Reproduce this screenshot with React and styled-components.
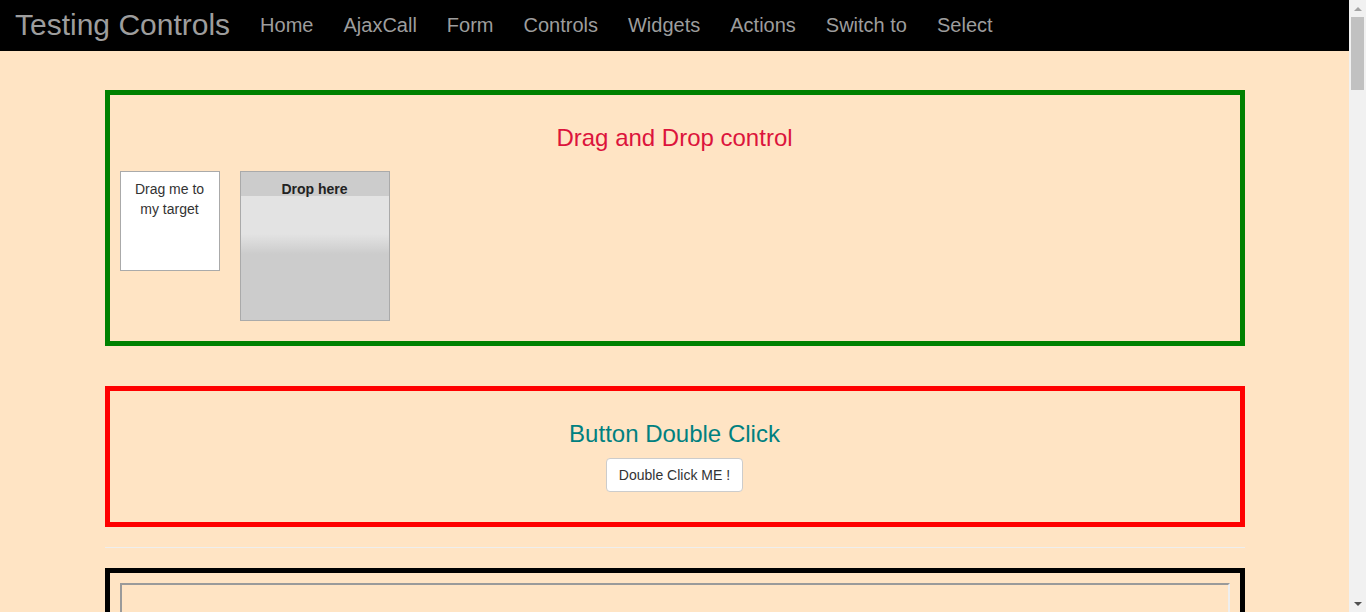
import styled, { createGlobalStyle } from "styled-components"

const GlobalStyle = createGlobalStyle`
  html, body {
    height: 100%;
    overflow: hidden;
  }
  body {
    margin: 0;
    background: bisque;
    font-family: "Liberation Sans", Arial, sans-serif;
    font-size: 14px;
    line-height: 1.42857;
    color: #333;
  }
  * {
    box-sizing: border-box;
  }
`

const links = ["Home", "AjaxCall", "Form", "Controls", "Widgets", "Actions", "Switch to", "Select"]

export default function App() {
  return (
    <>
      <GlobalStyle />
      <Screen>
        <Page>
          <Navbar>
            <Brand href="#">Testing Controls</Brand>
            <NavList>
              {links.map((l) => (
                <li key={l}>
                  <NavLink href="#">{l}</NavLink>
                </li>
              ))}
            </NavList>
          </Navbar>
          <Container>
            <Panel color="green" $gap="40px">
              <Heading color="crimson">Drag and Drop control</Heading>
              <DragRow>
                <Draggable>Drag me to my target</Draggable>
                <Droppable>
                  <DropHeader>Drop here</DropHeader>
                </Droppable>
              </DragRow>
            </Panel>

            <Panel color="red">
              <Heading color="teal">Button Double Click</Heading>
              <ButtonRow>
                <Button>Double Click ME !</Button>
              </ButtonRow>
            </Panel>

            <Rule />

            <Panel color="black">
              <Frame />
            </Panel>
          </Container>
        </Page>
        <Scrollbar>
          <Arrow $up />
          <Track>
            <Thumb />
          </Track>
          <Arrow />
        </Scrollbar>
      </Screen>
    </>
  )
}

const Screen = styled.div`
  display: flex;
  height: 100vh;
`

const Page = styled.div`
  flex: 1;
  overflow: hidden;
`

const Scrollbar = styled.div`
  width: 17px;
  display: flex;
  flex-direction: column;
  background: #f1f1f1;
`

const Arrow = styled.div`
  height: 17px;
  display: flex;
  align-items: center;
  justify-content: center;
  &::before {
    content: "";
    width: 0;
    height: 0;
    border-left: 4px solid transparent;
    border-right: 4px solid transparent;
    ${(p) => (p.$up ? "border-bottom: 4px solid #a3a3a3;" : "border-top: 4px solid #505050;")}
  }
`

const Track = styled.div`
  flex: 1;
  padding: 0 2px;
`

const Thumb = styled.div`
  height: 73px;
  background: #c1c1c1;
`

const Navbar = styled.nav`
  display: flex;
  align-items: center;
  height: 51px;
  background: #000;
  border-bottom: 1px solid #000;
  padding: 0 15px;
`

const Brand = styled.a`
  color: #9d9d9d;
  font-size: 30px;
  line-height: 20px;
  padding: 15px 15px 15px 0;
  text-decoration: none;
`

const NavList = styled.ul`
  display: flex;
  list-style: none;
  margin: 0;
  padding: 0;
`

const NavLink = styled.a`
  display: block;
  color: #9d9d9d;
  font-size: 20px;
  line-height: 20px;
  padding: 15px;
  text-decoration: none;
`

const Container = styled.div`
  width: 1170px;
  margin: 39px auto 0;
  padding: 0 15px;
`

const Panel = styled.div`
  border: 5px solid ${(p) => p.color};
  padding: 10px;
  margin-bottom: ${(p) => p.$gap || "0"};
`

const Heading = styled.h3`
  margin: 20px 0 10px;
  font-size: 24px;
  font-weight: 400;
  line-height: 1.1;
  text-align: center;
  color: ${(p) => p.color};
`

const DragRow = styled.div`
  display: flex;
  align-items: flex-start;
`

const Draggable = styled.div`
  width: 100px;
  height: 100px;
  margin: 10px 10px 10px 0;
  padding: 8px 7px;
  background: #fff;
  border: 1px solid #aaa;
  text-align: center;
  color: #333;
`

const Droppable = styled.div`
  width: 150px;
  height: 150px;
  margin: 10px;
  border: 1px solid #aaa;
  background: linear-gradient(
    to bottom,
    #e3e3e3 0,
    #e3e3e3 62px,
    #cccccc 82px,
    #cccccc 100%
  );
`

const DropHeader = styled.div`
  height: 24px;
  padding-top: 7px;
  line-height: 20px;
  background: #ccc;
  font-weight: 700;
  text-align: center;
  color: #222;
`

const ButtonRow = styled.div`
  display: flex;
  justify-content: center;
  padding-bottom: 20px;
`

const Button = styled.button`
  font-family: "Liberation Sans", Arial, sans-serif;
  font-size: 14px;
  line-height: 20px;
  padding: 6px 12px;
  color: #333;
  background: #fff;
  border: 1px solid #ccc;
  border-radius: 4px;
  cursor: pointer;
`

const Rule = styled.hr`
  margin: 20px 0;
  border: 0;
  border-top: 1px solid #eee;
`

const Frame = styled.div`
  height: 300px;
  border-top: 2px solid #9a9a9a;
  border-left: 2px solid #9a9a9a;
  border-right: 2px solid #eee;
  border-bottom: 2px solid #eee;
`
